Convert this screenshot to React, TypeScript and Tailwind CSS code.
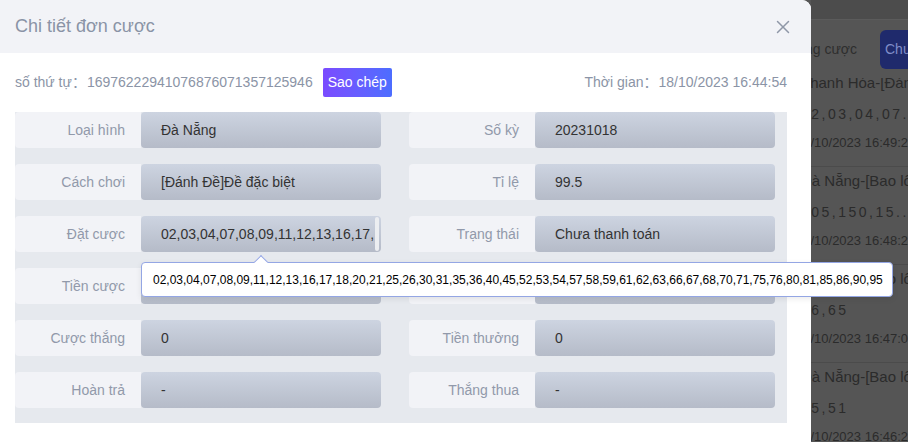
import { X } from 'lucide-react';

const rows: [string, string, string, string][] = [
  ['Loại hình', 'Đà Nẵng', 'Số kỳ', '20231018'],
  ['Cách chơi', '[Đánh Đề]Đề đặc biệt', 'Tỉ lệ', '99.5'],
  ['Đặt cược', '02,03,04,07,08,09,11,12,13,16,17,18,20,21,25,26,30,31,35,36,40,45,52,53,54,57,58,59,61,62,63,66,67,68,70,71,75,76,80,81,85,86,90,95', 'Trạng thái', 'Chưa thanh toán'],
  ['Tiền cược', '44', 'Số tiền', '44'],
  ['Cược thắng', '0', 'Tiền thưởng', '0'],
  ['Hoàn trả', '-', 'Thắng thua', '-'],
];

const numbers = rows[2][1];

// background list behind the overlay
const history = [
  { title: 'Thanh Hóa-[Đánh Đề]', nums: '02,03,04,07...', time: '18/10/2023 16:49:29' },
  { title: 'Đà Nẵng-[Bao lô]', nums: '105,150,15...', time: '18/10/2023 16:48:27' },
  { title: 'Đà Nẵng-[Bao lô]', nums: '56,65', time: '18/10/2023 16:47:05' },
  { title: 'Đà Nẵng-[Bao lô]', nums: '15,51', time: '18/10/2023 16:46:27' },
];

function Field({ label, value, scroll }: { label: string; value: string; scroll?: boolean }) {
  return (
    <div className="flex h-9 min-w-0">
      <div className="flex w-[126px] shrink-0 items-center justify-end rounded-l-[4px] bg-[#f2f3f7] pr-4 text-[14px] text-[#9199aa]">
        {label}
      </div>
      <div className="flex min-w-0 flex-1 rounded-[4px] bg-gradient-to-b from-[#cdd4e1] to-[#b5bbc8]">
        <div className="flex min-w-0 flex-1 items-center overflow-hidden whitespace-nowrap pl-5 text-[14px] text-[#333]">
          {scroll ? <span>02,03,04,07,08,09,11,12,13,16,17,</span> : value}
        </div>
        {scroll && <div className="my-px mr-[2px] w-[4px] shrink-0 rounded-[2px] bg-[#eceef1]" />}
      </div>
    </div>
  );
}

export default function App() {
  return (
    <div className="flex h-[442px] w-[908px] overflow-hidden bg-[#555555] font-['Liberation_Sans',Arial,'Noto_Sans_CJK_SC',sans-serif]">
      {/* Modal */}
      <div className="relative z-10 flex w-[811px] shrink-0 flex-col rounded-tr-[9px] bg-white">
        <div className="flex h-[53px] items-center justify-between rounded-tr-[9px] bg-[#f2f3f7] pl-[15px] pr-[17px]">
          <h2 className="text-[18px] text-[#8a93a6]">Chi tiết đơn cược</h2>
          <X className="h-[22px] w-[22px] text-[#8f97a8]" strokeWidth={1.6} />
        </div>

        <div className="flex h-[59px] items-center justify-between px-[15px] text-[14px] text-[#8b94a6]">
          <div className="flex items-center">
            <span>số thứ tự：</span>
            <span className="ml-px">16976222941076876071357125946</span>
            <button className="ml-[10px] h-[29px] rounded-[2px] bg-gradient-to-r from-[#7a4bff] to-[#4c6dff] px-[5px] text-[14px] text-white">
              Sao chép
            </button>
          </div>
          <div className="pr-[9px]">
            <span>Thời gian：</span>
            <span className="ml-px">18/10/2023 16:44:54</span>
          </div>
        </div>

        <div className="relative ml-[15px] grid w-[772px] grid-cols-[366px_366px] gap-x-7 gap-y-4 bg-[#e6e9ee] pb-[15px] pr-3">
          {rows.map(([l1, v1, l2, v2], i) => (
            <div key={i} className="contents">
              <Field label={l1} value={v1} scroll={i === 2} />
              <Field label={l2} value={v2} />
            </div>
          ))}

          {/* tooltip over the "Đặt cược" value */}
          <div className="absolute left-[126px] top-[150px] z-20 flex h-[35px] w-[752px] items-center rounded-[4px] border border-[#94a6e4] bg-white pl-[11px] text-[12px] text-black shadow-[0_2px_6px_rgba(0,0,0,0.08)]">
            <span className="absolute -top-[6px] left-[114px] h-[10px] w-[10px] rotate-45 border-l border-t border-[#94a6e4] bg-white" />
            <span className="relative">{numbers}</span>
          </div>
        </div>

        <div className="flex-1" />
      </div>

      {/* Page behind the dimmed overlay */}
      <div className="flex min-w-0 flex-1 flex-col overflow-hidden">
        <div className="h-5 shrink-0 border-b border-[#5b5b5b] bg-[#4c4c4c]" />
        <div className="relative z-10 -ml-[80px] flex h-[58px] shrink-0 items-center whitespace-nowrap bg-[#555555]">
          <div className="w-[126px] shrink-0 text-right text-[14px] text-[#2e2e2e]">Đang cược</div>
          <div className="ml-[23px] flex h-[39px] w-[120px] shrink-0 items-center rounded-[6px] bg-[#1f2a6c] pl-[5px] text-[14px] text-[#7f8dc9]">
            Chưa thanh toán
          </div>
        </div>
        <div className="-ml-[80px] -mt-[9px] flex flex-col">
          {history.map((h, i) => (
            <div key={i} className="flex h-[98px] shrink-0 flex-col whitespace-nowrap border-b border-[#4b4b4b] pl-[70px] pt-[2px] text-[#2b2b2b]">
              <div className="h-6 text-[15px] leading-6">{h.title}</div>
              <div className="mt-[7px] h-6 text-[14px] leading-6 tracking-[2.5px]">{h.nums}</div>
              <div className="-ml-[5px] mt-[5px] h-6 text-[13px] leading-6">{h.time}</div>
            </div>
          ))}
        </div>
      </div>
    </div>
  );
}
